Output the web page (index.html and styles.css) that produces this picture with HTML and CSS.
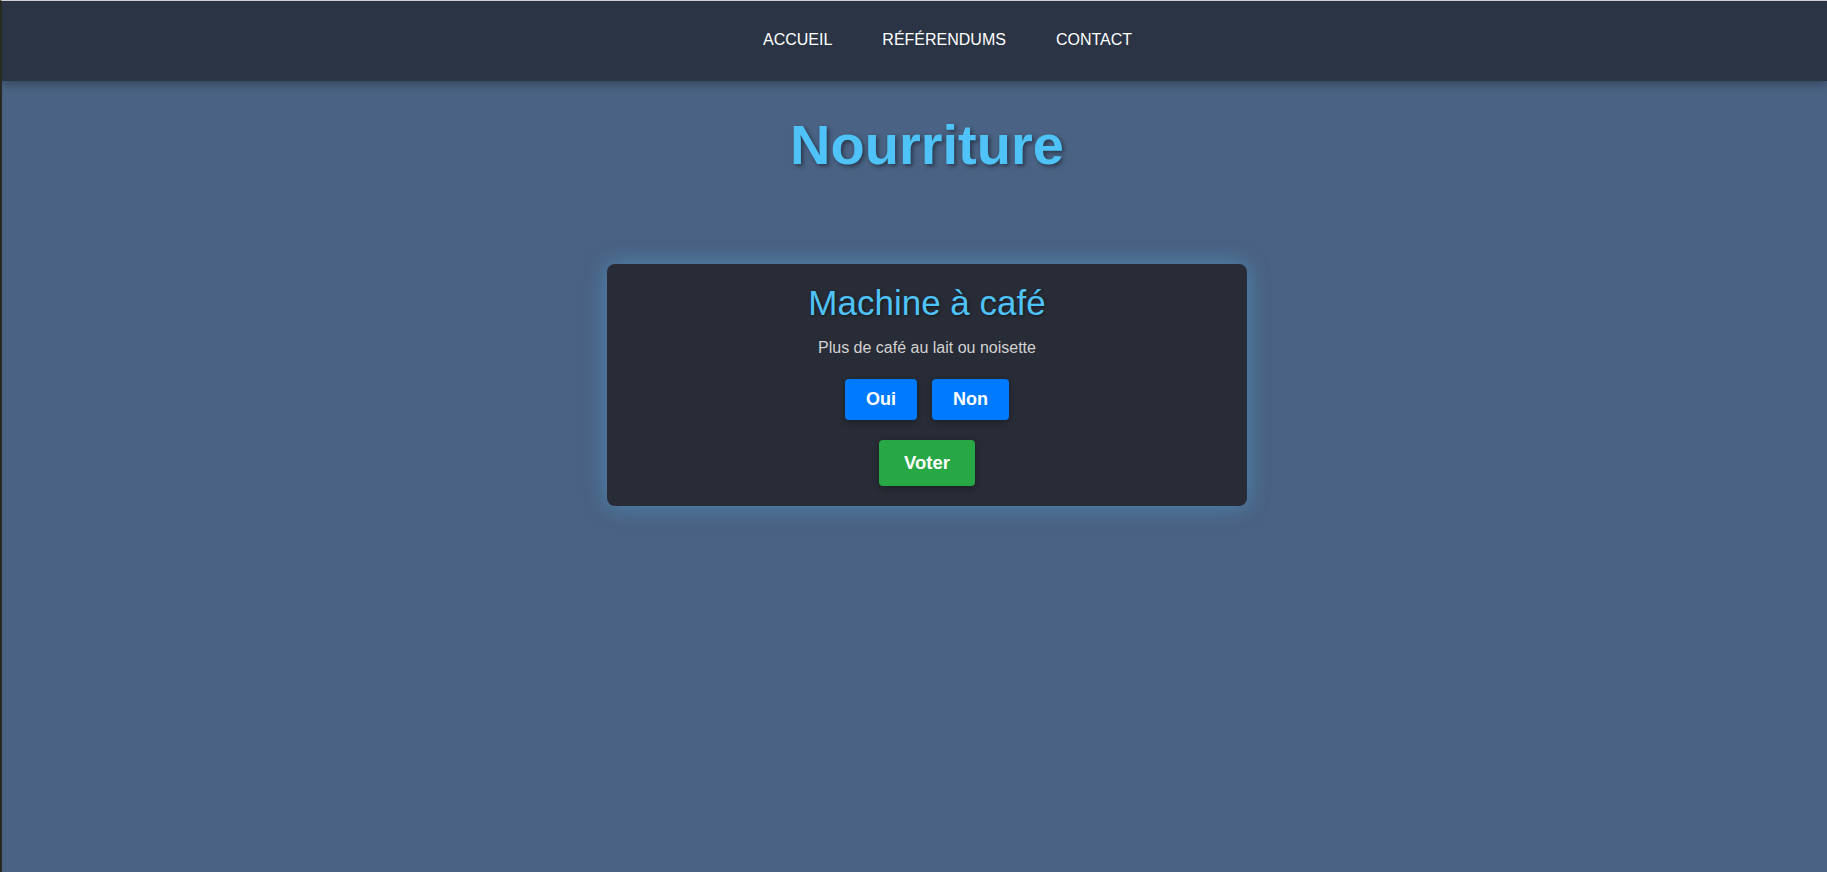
FILE: index.html
```html
<!DOCTYPE html>
<html lang="fr">
<head>
<meta charset="utf-8">
<title>Nourriture</title>
<link rel="stylesheet" href="styles.css">
</head>
<body>
<nav class="topbar">
  <ul class="menu">
    <li><a href="#">ACCUEIL</a></li>
    <li><a href="#">RÉFÉRENDUMS</a></li>
    <li><a href="#">CONTACT</a></li>
  </ul>
</nav>
<main class="content">
  <h1 class="page-title">Nourriture</h1>
  <section class="card">
    <h2 class="card-title">Machine à café</h2>
    <p class="card-text">Plus de café au lait ou noisette</p>
    <div class="choices">
      <button class="btn btn-blue">Oui</button>
      <button class="btn btn-blue">Non</button>
    </div>
    <button class="btn btn-green">Voter</button>
  </section>
</main>
</body>
</html>
```
FILE: styles.css
```css
html, body {
  margin: 0;
  padding: 0;
}
body {
  min-height: 871px;
  background: #4a6283;
  border-top: 1px solid #cfcfcf;
  border-left: 2px solid #262a21;
  font-family: "Liberation Sans", Arial, sans-serif;
  overflow: hidden;
}
.topbar {
  height: 80px;
  background: #2b3444;
  box-shadow: 0 2px 10px rgba(0, 0, 0, 0.35);
  display: flex;
  align-items: center;
  justify-content: center;
  position: relative;
  z-index: 1;
}
.menu {
  list-style: none;
  margin: -3px 0 0;
  padding: 0 0 0 66px;
  display: flex;
  gap: 50px;
}
.menu a {
  color: #ffffff;
  text-decoration: none;
  font-size: 16px;
}
.content {
  display: flex;
  flex-direction: column;
  align-items: center;
  padding-left: 25px;
}
.page-title {
  margin: 31px 0 87px;
  font-size: 56px;
  font-weight: bold;
  color: #4fc3f7;
  text-shadow: 2px 2px 4px rgba(0, 0, 0, 0.45);
}
.card {
  width: 640px;
  box-sizing: border-box;
  padding: 19px 20px 20px;
  background: #282c36;
  border-radius: 8px;
  box-shadow: 0 0 22px rgba(79, 195, 247, 0.4);
  display: flex;
  flex-direction: column;
  align-items: center;
}
.card-title {
  margin: 0;
  font-size: 35px;
  font-weight: normal;
  color: #4fc3f7;
  text-shadow: 1px 1px 3px rgba(0, 0, 0, 0.5);
}
.card-text {
  margin: 16px 0 22px;
  font-size: 16px;
  color: #d2d2d2;
}
.choices {
  display: flex;
  gap: 15px;
  margin-bottom: 20px;
}
.btn {
  border: none;
  border-radius: 4px;
  color: #ffffff;
  font-family: "Liberation Sans", Arial, sans-serif;
  font-size: 18px;
  font-weight: bold;
  line-height: 21px;
  cursor: pointer;
  box-shadow: 0 2px 6px rgba(0, 0, 0, 0.35);
}
.btn-blue {
  background: #007bff;
  padding: 10px 21px;
}
.btn-green {
  background: #28a745;
  padding: 12px 25px;
  font-size: 18.5px;
  line-height: 22px;
}
```
